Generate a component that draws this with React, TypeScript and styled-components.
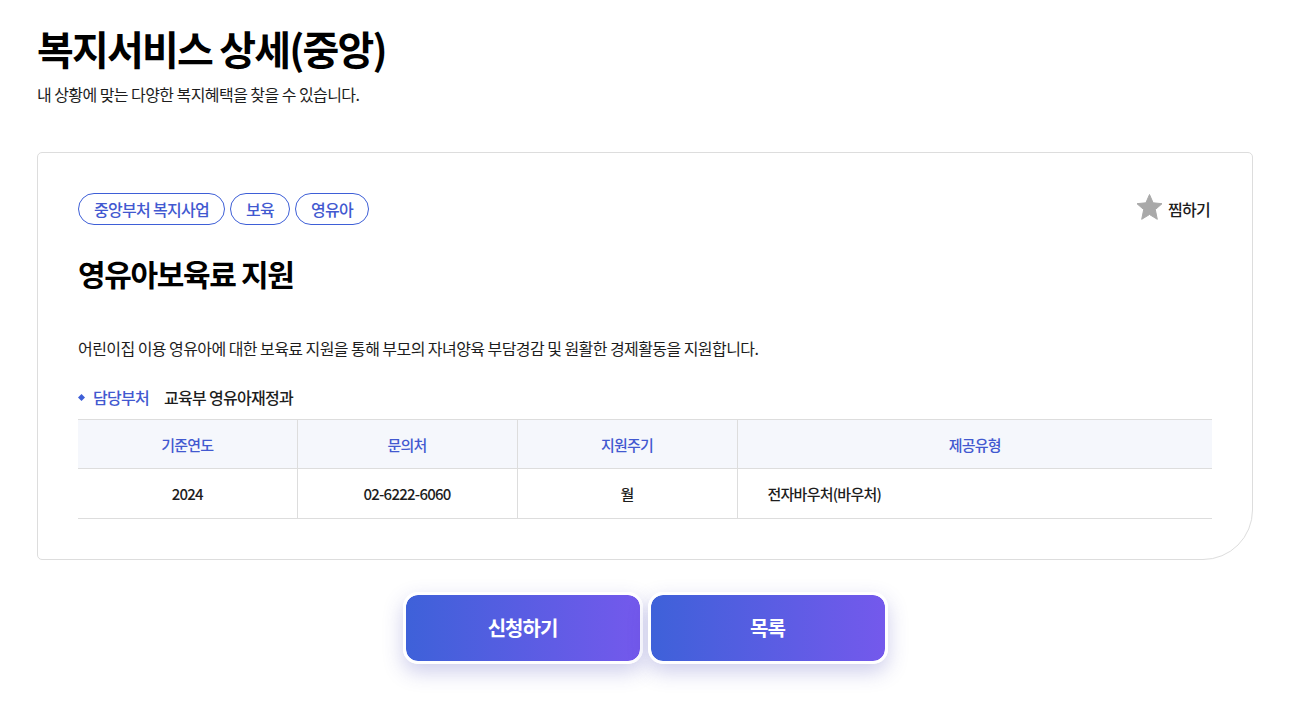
import React from "react";
import styled, { createGlobalStyle } from "styled-components";

const Global = createGlobalStyle`
  * { box-sizing: border-box; }
  body {
    margin: 0;
    background: #fff;
    color: #1d1d1d;
    font-family: "Noto Sans CJK KR", "Noto Sans", sans-serif;
    font-size: 16px;
    letter-spacing: -0.035em;
  }
`;

const Page = styled.main`
  padding: 18px 44px 44px 37px;
`;

const Title = styled.h1`
  margin: 0;
  font-size: 40px;
  line-height: 60px;
  font-weight: 700;
  letter-spacing: -0.045em;
  color: #000;
`;

const Lead = styled.p`
  margin: 5px 0 0;
  line-height: 22px;
`;

const Card = styled.section`
  margin-top: 47px;
  padding: 40px;
  border: 1px solid #ddd;
  border-radius: 5px 5px 50px 5px;
`;

const CardTop = styled.div`
  display: flex;
  justify-content: space-between;
  align-items: center;
`;

const Tags = styled.ul`
  display: flex;
  gap: 5px;
  margin: 0;
  padding: 0;
  list-style: none;
`;

const Tag = styled.li`
  padding: 0 15px;
  border: 1px solid #3e5fd7;
  border-radius: 16px;
  line-height: 30px;
  font-weight: 500;
  letter-spacing: -0.045em;
  color: #4259d0;
`;

const Favorite = styled.button`
  display: flex;
  align-items: flex-start;
  gap: 5px;
  padding: 0 2px 0 0;
  border: 0;
  background: none;
  font: inherit;
  line-height: 32px;
  font-weight: 500;
  letter-spacing: -0.045em;
  color: inherit;
  cursor: pointer;
`;

const ServiceName = styled.h2`
  margin: 26px 0 0;
  font-size: 30px;
  line-height: 44px;
  font-weight: 700;
  letter-spacing: -0.045em;
  color: #000;
`;

const Summary = styled.p`
  margin: 42px 0 0;
  line-height: 22px;
`;

const Department = styled.dl`
  display: flex;
  align-items: center;
  margin: 27px 0 11px;
  line-height: 22px;
  font-weight: 500;
  letter-spacing: -0.045em;
`;

const Term = styled.dt`
  display: flex;
  align-items: center;
  gap: 8px;
  color: #4259d0;
`;

const Detail = styled.dd`
  margin: 0 0 0 15px;
`;

const Table = styled.table`
  width: 100%;
  table-layout: fixed;
  border-collapse: collapse;
  font-size: 15px;
  font-weight: 500;
  letter-spacing: -0.05em;
  border-bottom: 1px solid #ddd;
`;

const Col = styled.col<{ $width?: number }>`
  width: ${({ $width }) => ($width ? `${$width}px` : "auto")};
`;

const Head = styled.th`
  height: 49px;
  padding: 0;
  border-top: 1px solid #ddd;
  background: #f5f7fc;
  color: #4259d0;
  font-weight: 500;
  & + & { border-left: 1px solid #ddd; }
`;

const Cell = styled.td<{ $left?: boolean }>`
  height: 50px;
  padding: 0 30px;
  border-top: 1px solid #ddd;
  text-align: ${({ $left }) => ($left ? "left" : "center")};
  & + & { border-left: 1px solid #ddd; }
`;

const Actions = styled.div`
  display: flex;
  justify-content: center;
  gap: 5px;
  margin-top: 32px;
`;

const Action = styled.button`
  width: 240px;
  height: 72px;
  padding: 0 0 2px;
  border: 3px solid #fff;
  border-radius: 15px;
  background: linear-gradient(90deg, #3e61d9, #7459ec) padding-box;
  box-shadow: 0 8px 20px rgba(60, 60, 180, 0.25);
  color: #fff;
  font: inherit;
  font-size: 20px;
  font-weight: 700;
  letter-spacing: -0.05em;
  cursor: pointer;
`;

const columns = [
  { name: "기준연도", value: "2024", width: 219 },
  { name: "문의처", value: "02-6222-6060", width: 220 },
  { name: "지원주기", value: "월", width: 220 },
  { name: "제공유형", value: "전자바우처(바우처)", left: true },
];

export default function App() {
  return (
    <Page>
      <Global />
      <Title>복지서비스 상세(중앙)</Title>
      <Lead>내 상황에 맞는 다양한 복지혜택을 찾을 수 있습니다.</Lead>
      <Card>
        <CardTop>
          <Tags>
            <Tag>중앙부처 복지사업</Tag>
            <Tag>보육</Tag>
            <Tag>영유아</Tag>
          </Tags>
          <Favorite type="button">
            <svg width="27" height="28" viewBox="0 0 27 28" aria-hidden="true">
              <path
                d="M13.5 1.500L17.100 9.800L26 10.700L19.300 16.600L21.300 26.300L13.500 21.500L5.700 26.300L7.700 16.600L1 10.700L9.900 9.800Z"
                fill="#a9a9a9" stroke="#a9a9a9" strokeWidth="1" strokeLinejoin="round"
              />
            </svg>
            찜하기
          </Favorite>
        </CardTop>
        <ServiceName>영유아보육료 지원</ServiceName>
        <Summary>
          어린이집 이용 영유아에 대한 보육료 지원을 통해 부모의 자녀양육 부담경감 및 원활한 경제활동을 지원합니다.
        </Summary>
        <Department>
          <Term>
            <svg width="7" height="7" viewBox="0 0 7 7" aria-hidden="true">
              <path d="M3.500 0L7 3.500 3.500 7 0 3.500z" fill="#3e5fd7" />
            </svg>
            담당부처
          </Term>
          <Detail>교육부 영유아재정과</Detail>
        </Department>
        <Table>
          <colgroup>
            {columns.map((c) => <Col key={c.name} $width={c.width} />)}
          </colgroup>
          <thead>
            <tr>{columns.map((c) => <Head key={c.name} scope="col">{c.name}</Head>)}</tr>
          </thead>
          <tbody>
            <tr>{columns.map((c) => <Cell key={c.name} $left={c.left}>{c.value}</Cell>)}</tr>
          </tbody>
        </Table>
      </Card>
      <Actions>
        <Action type="button">신청하기</Action>
        <Action type="button">목록</Action>
      </Actions>
    </Page>
  );
}
